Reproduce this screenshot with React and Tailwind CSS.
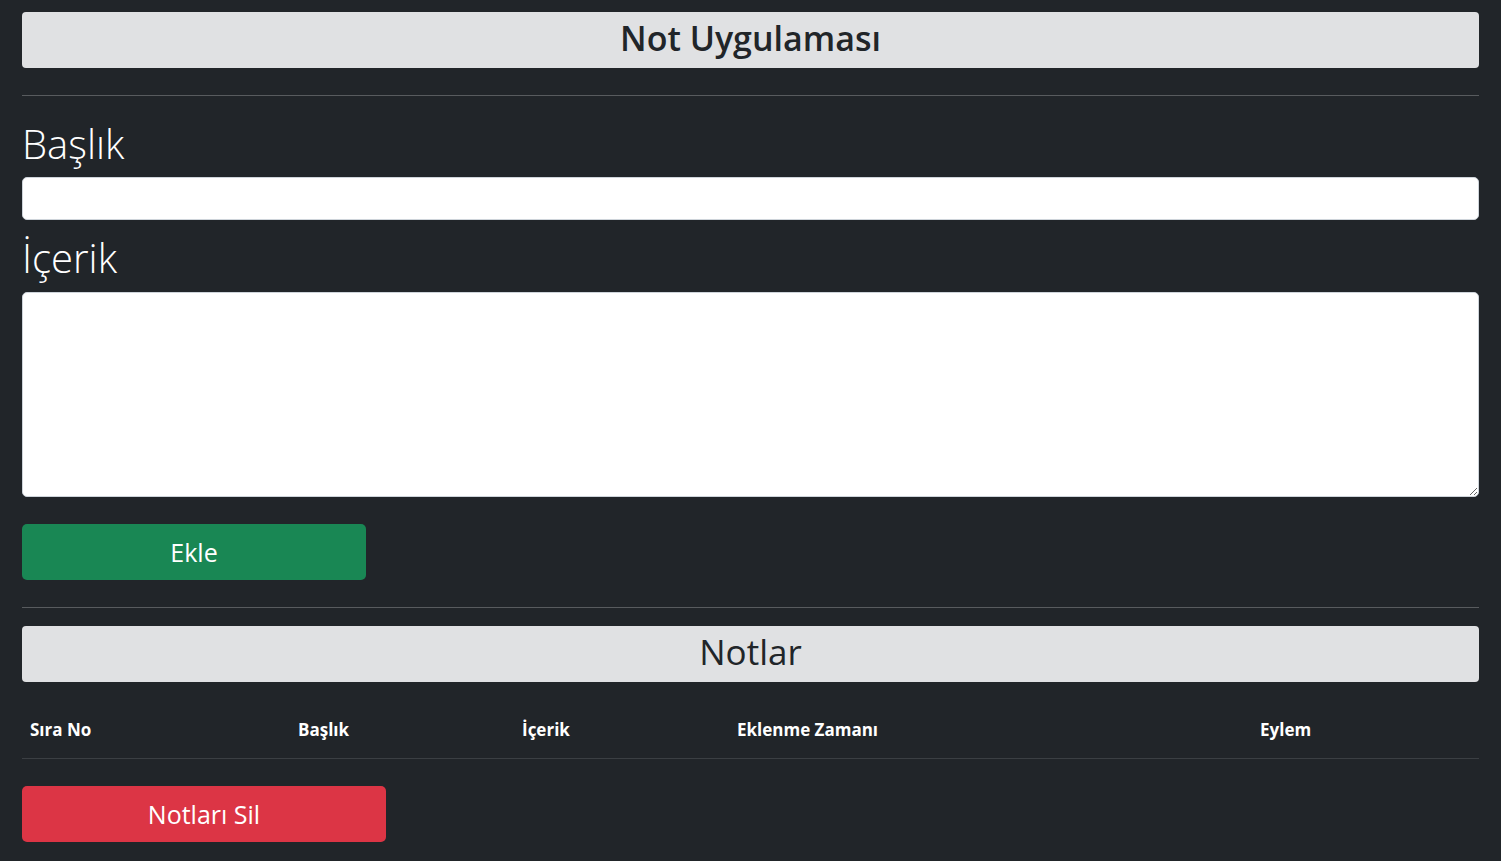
import React, { useState } from "react";

const font = { fontFamily: '"Open Sans", "Noto Sans", sans-serif' };

const columns = [
  { label: "Sıra No", width: "w-[268px]" },
  { label: "Başlık", width: "w-[224px]" },
  { label: "İçerik", width: "w-[215px]" },
  { label: "Eklenme Zamanı", width: "w-[523px]" },
  { label: "Eylem", width: "flex-1" },
];

const App = () => {
  const [title, setTitle] = useState("");
  const [content, setContent] = useState("");
  const [notes, setNotes] = useState([]);

  const handleAdd = () => {
    if (!title.trim()) return;
    setNotes([...notes, { title, content, createdAt: new Date().toLocaleString("tr-TR") }]);
    setTitle("");
    setContent("");
  };

  return (
    <div className="min-h-[861px] bg-[#212529] text-white" style={font}>
      <div className="px-[22px] pt-[12px] pb-[20px]">
        {/* Header */}
        <div className="h-[56px] rounded-[4px] bg-[#e0e1e3] flex items-center justify-center pb-[5px]">
          <h1 className="text-[34px] font-semibold text-[#212529] leading-none">Not Uygulaması</h1>
        </div>

        <hr className="mt-[27px] border-0 border-t border-[#585b5e]" />

        {/* Form */}
        <label className="block mt-[22px] mb-[7px] text-[40px] font-light leading-[52px]">Başlık</label>
        <input
          value={title}
          onChange={(e) => setTitle(e.target.value)}
          className="block w-full h-[43px] rounded-[5px] bg-white border border-[#ced4da] px-3 text-[#212529] outline-none"
        />

        <label className="block mt-[12px] mb-[8px] text-[40px] font-light leading-[52px]">İçerik</label>
        <textarea
          value={content}
          onChange={(e) => setContent(e.target.value)}
          className="block w-full h-[205px] rounded-[5px] bg-white border border-[#ced4da] px-3 py-2 text-[#212529] outline-none resize-y"
        />

        <button
          onClick={handleAdd}
          className="mt-[27px] w-[344px] h-[56px] rounded-[5px] bg-[#198754] text-white text-[25px] flex items-center justify-center pt-[2px]"
        >
          Ekle
        </button>

        <hr className="mt-[27px] border-0 border-t border-[#585b5e]" />

        {/* Notes */}
        <div className="mt-[18px] h-[56px] rounded-[4px] bg-[#e0e1e3] flex items-center justify-center pb-[6px]">
          <h2 className="text-[35px] font-medium text-[#212529] leading-none">Notlar</h2>
        </div>

        <div className="mt-[36px] flex border-b border-[#3b3f43] text-[17px] font-bold pb-[16px]">
          {columns.map((col) => (
            <div key={col.label} className={`${col.width} px-2 leading-[24px]`}>
              {col.label}
            </div>
          ))}
        </div>
        {notes.map((note, idx) => (
          <div key={idx} className="flex border-b border-[#3b3f43] text-[16px] py-2">
            <div className="w-[268px] px-2">{idx + 1}</div>
            <div className="w-[224px] px-2">{note.title}</div>
            <div className="w-[215px] px-2">{note.content}</div>
            <div className="w-[523px] px-2">{note.createdAt}</div>
            <div className="flex-1 px-2">
              <button
                onClick={() => setNotes(notes.filter((_, i) => i !== idx))}
                className="text-sm px-2 py-1 rounded bg-[#dc3545]"
              >
                Sil
              </button>
            </div>
          </div>
        ))}

        <button
          onClick={() => setNotes([])}
          className="mt-[27px] w-[364px] h-[56px] rounded-[5px] bg-[#dc3545] text-white text-[25px] flex items-center justify-center pt-[2px]"
        >
          Notları Sil
        </button>
      </div>
    </div>
  );
};

export default App;
